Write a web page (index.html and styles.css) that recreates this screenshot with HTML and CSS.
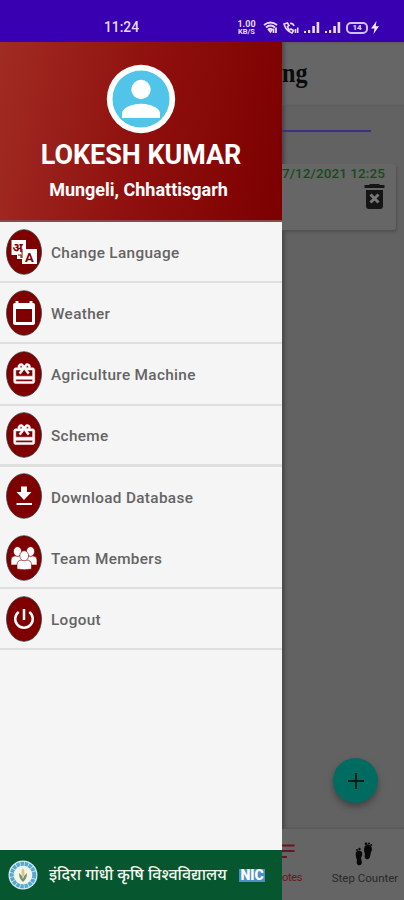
FILE: index.html
```html
<!DOCTYPE html>
<html lang="en">
<head>
<meta charset="utf-8">
<title>Navigation drawer</title>
<link rel="stylesheet" href="styles.css">
</head>
<body>
<div class="status">
  <span class="clock">11:24</span>
  <div class="status-icons">
    <span class="speed"><span class="rate">1.00</span><span class="unit">KB/S</span></span>
    <svg class="wifi" width="15" height="13" viewBox="0 0 15 13" fill="none" stroke="#e6dcff" stroke-width="1.800"><path d="M1 4Q7.500-1 14 4M3 6.500Q7.500 2.500 12 6.500M5.500 8.500Q7 7 9 8.500L7.500 11z"/><path d="M10.500 12V7.500M13 6.500V12"/></svg>
    <svg class="call" width="16" height="13" viewBox="0 0 16 13" fill="none" stroke="#e6dcff" stroke-width="1.600"><path d="M1 3Q3 10 9 12L10.500 9.500L8 8L6.500 9Q5 7.500 4.500 5.500L6 4.500L4.500 2zM7 2.500Q10 2 11 5"/><path d="M12.500 12V8M14.700 12V6.500"/></svg>
    <svg class="signal" width="16" height="13" viewBox="0 0 16 13" fill="#e6dcff"><path d="M0 10h2v2H0zM4 9h2.200v3H4zM8.300 5h2.600v7H8.300zM12.600 1h2.600v11h-2.600z"/></svg>
    <svg class="signal" width="16" height="13" viewBox="0 0 16 13" fill="#e6dcff"><path d="M0 10h2v2H0zM4 9h2.200v3H4zM8.300 5h2.600v7H8.300zM12.600 1h2.600v11h-2.600z"/></svg>
    <span class="battery">14</span>
    <svg class="bolt" width="8" height="13" viewBox="0 0 8 13" fill="#f3edff"><path d="M5.500 0L0 7.500h3.500L2.500 13L8 5.200H4.700z"/></svg>
  </div>
</div>
<div class="screen">
  <aside class="drawer">
    <header class="profile">
      <svg class="avatar" width="70" height="70" viewBox="0 0 70 70"><circle cx="35" cy="35" r="34.200" fill="#fff"/><circle cx="35" cy="35" r="28.500" fill="#50c4e9"/><circle cx="35" cy="25.500" r="9.700" fill="#fff"/><path d="M16 54v-4.500C16 43 28.500 39.800 35 39.800S54 43 54 49.500V54z" fill="#fff"/></svg>
      <div class="name">LOKESH KUMAR</div>
      <div class="place">Mungeli, Chhattisgarh</div>
    </header>
    <nav class="menu">
      <a class="item"><svg class="icon" viewBox="0 0 36 46"><ellipse class="disc" cx="18" cy="23" rx="17.500" ry="22.300"/><path fill="#fff" d="M5.500 11H20v9h11v15H16v-5h-5v-4H5.500z"/><text class="glyph-hi" x="6.500" y="22.500">अ</text><text class="glyph-a" x="19" y="32.500">A</text><path d="M12 26h3v3M16 20v9" fill="none" stroke="#7f0000"/></svg><span>Change Language</span></a>
      <a class="item"><svg class="icon" viewBox="0 0 36 46"><ellipse class="disc" cx="18" cy="23" rx="17.500" ry="22.300"/><path fill="#fff" fill-rule="evenodd" d="M9.500 11h3v2h11v-2h3v2h.500Q29 13 29 15v18q0 2-2 2H9q-2 0-2-2V15q0-2 2-2h.500zM10 19v13h16V19z"/></svg><span>Weather</span></a>
      <a class="item"><svg class="icon" viewBox="0 0 36 46"><ellipse class="disc" cx="18" cy="23" rx="17.500" ry="22.300"/><g transform="translate(5.600 10.500) scale(1.050)"><path class="gift" d="M20 6h-2.180c.110-.310.180-.650.180-1a2.996 2.996 0 0 0-5.500-1.650l-.500.670-.500-.680C10.960 2.540 10.050 2 9 2 7.340 2 6 3.340 6 5c0 .350.070.690.180 1H4c-1.110 0-1.990.890-1.990 2L2 19c0 1.110.890 2 2 2h16c1.110 0 2-.890 2-2V8c0-1.110-.890-2-2-2zm-5-2c.550 0 1 .450 1 1s-.450 1-1 1-1-.450-1-1 .450-1 1-1zM9 4c.550 0 1 .450 1 1s-.450 1-1 1-1-.450-1-1 .450-1 1-1zm11 15H4v-2h16v2zm0-5H4V8h5.080L7 10.830 8.620 12 12 7.400l3.380 4.600L17 10.830 14.920 8H20v6z"/></g></svg><span>Agriculture Machine</span></a>
      <a class="item wide-rule"><svg class="icon" viewBox="0 0 36 46"><ellipse class="disc" cx="18" cy="23" rx="17.500" ry="22.300"/><g transform="translate(5.600 10.500) scale(1.050)"><path class="gift" d="M20 6h-2.180c.110-.310.180-.650.180-1a2.996 2.996 0 0 0-5.500-1.650l-.500.670-.500-.680C10.960 2.540 10.050 2 9 2 7.340 2 6 3.340 6 5c0 .350.070.690.180 1H4c-1.110 0-1.990.890-1.990 2L2 19c0 1.110.890 2 2 2h16c1.110 0 2-.890 2-2V8c0-1.110-.890-2-2-2zm-5-2c.550 0 1 .450 1 1s-.450 1-1 1-1-.450-1-1 .450-1 1-1zM9 4c.550 0 1 .450 1 1s-.450 1-1 1-1-.450-1-1 .450-1 1-1zm11 15H4v-2h16v2zm0-5H4V8h5.080L7 10.830 8.620 12 12 7.400l3.380 4.600L17 10.830 14.920 8H20v6z"/></g></svg><span>Scheme</span></a>
      <a class="item no-rule"><svg class="icon" viewBox="0 0 36 46"><ellipse class="disc" cx="18" cy="23" rx="17.500" ry="22.300"/><path fill="#fff" d="M15 13.500h6V19h4.500L18 27l-7.500-8H15zM10.500 30h15.500v2H10.500z"/></svg><span>Download Database</span></a>
      <a class="item"><svg class="icon" viewBox="0 0 36 46"><ellipse class="disc" cx="18" cy="23" rx="17.500" ry="22.300"/><g fill="#fff" stroke="#7f0000" stroke-width=".600"><path d="M5 30v-5q0-4 4-4h5q4 0 4 4v5zM18 30v-5q0-4 4-4h5q4 0 4 4v5z"/><ellipse cx="11.500" cy="16.500" rx="4" ry="4.800"/><ellipse cx="24.500" cy="16.500" rx="4" ry="4.800"/><path d="M11 34v-4q0-5 5-5h4.500q5 0 5 5v4q-7 1.500-14.500 0z"/><ellipse cx="18.200" cy="20.800" rx="4.400" ry="5"/></g></svg><span>Team Members</span></a>
      <a class="item"><svg class="icon" viewBox="0 0 36 46"><ellipse class="disc" cx="18" cy="23" rx="17.500" ry="22.300"/><path fill="none" stroke="#fff" stroke-width="2.500" d="M18 13v11M12.700 16a8.800 8.800 0 1 0 10.600 0"/></svg><span>Logout</span></a>
    </nav>
    <footer class="university">
      <svg class="seal" width="30" height="30" viewBox="0 0 30 30"><circle cx="15" cy="15" r="14.500" fill="#d9edf2"/><circle cx="15" cy="15" r="11.300" fill="none" stroke="#55a9cf" stroke-width="4" stroke-dasharray="3.500 .700"/><circle cx="15" cy="15" r="9" fill="#f4f5e9"/><path d="M15 22Q11 19 11 13Q14 15 15 19Q16 15 19 13Q19 19 15 22" fill="#769067"/><path d="M15 8q3 4 0 10q-3-6 0-10" fill="#d4c58e"/></svg>
      <span class="uni-name">इंदिरा गांधी कृषि विश्वविद्यालय</span>
      <span class="nic">NIC</span>
    </footer>
  </aside>
  <main class="content">
    <h1 class="title"><span>ng</span></h1>
    <div class="tab-line"></div>
    <section class="card">
      <span class="date">7/12/2021 12:25</span>
      <svg class="trash" width="21" height="26" viewBox="0 0 21 26"><path fill="#151515" d="M6 1h9l1 1h4.500v3H.500V2H5zM2 7h17v16q0 3-3 3H5q-3 0-3-3z"/><path d="M6.500 11.500l8 8M14.500 11.500l-8 8" stroke="#777" stroke-width="3"/></svg>
    </section>
    <div class="fab"><svg width="16" height="16" viewBox="0 0 16 16"><path d="M8 0v16M0 8h16" stroke="#051b18" stroke-width="2"/></svg></div>
    <div class="tabs">
      <div class="tab notes"><svg width="13" height="15" viewBox="0 0 13 15"><path d="M0 1.500h12.500M0 7h12.500M0 13h5" stroke="#641820" stroke-width="2"/></svg><span>otes</span></div>
      <div class="tab steps"><svg width="18" height="24" viewBox="0 0 18 24" fill="#080808"><path d="M1 10q3-3 6 0q1 3-1 6l1 5q-1 3-4 2q-2-1-1-5Q0 13 1 10M10 4q3-3 6 0q2 3 0 6l-1 5q-1 3-4 2q-2-1-1-5Q8 7 10 4"/><circle cx="2" cy="8" r="1"/><circle cx="4.500" cy="7" r="1.200"/><circle cx="11" cy="1.800" r="1.400"/><circle cx="14" cy="1.500" r="1"/><circle cx="16.200" cy="3" r="1"/></svg><span>Step Counter</span></div>
    </div>
  </main>
</div>
</body>
</html>
```
FILE: styles.css
```css
* { box-sizing: border-box; }
body { margin: 0; width: 404px; height: 900px; overflow: hidden; font-family: Roboto, "Noto Sans", sans-serif; }
.status { height: 42px; padding: 13px 25px 0 104px; display: flex; justify-content: space-between; align-items: center; background: #3900b1; color: #e6dcff; }
.clock { font-size: 13.800px; font-weight: 500; line-height: 15px; }
.status-icons { display: flex; align-items: center; }
.speed { display: flex; flex-direction: column; align-items: center; width: 19px; margin-right: 7px; font-weight: 700; line-height: 7px; }
.rate { font-size: 9px; }
.unit { font-size: 7.500px; }
.call { margin-left: 5px; }
.signal { margin-left: 5px; }
.battery { width: 22px; height: 12px; margin-left: 5px; border: 2px solid #cfc0fa; border-radius: 5px; font-size: 8px; font-weight: 700; line-height: 8px; text-align: center; }
.bolt { margin-left: 3px; }
.screen { display: grid; grid-template-columns: 282px 122px; height: 858px; }
.drawer { display: flex; flex-direction: column; min-width: 0; background: #f5f5f5; }
.profile { height: 180px; padding-top: 22px; display: flex; flex-direction: column; align-items: center; color: #fff; background: linear-gradient(100deg, #a12c23 0%, #8f100e 50%, #7c0000 100%); border-bottom: 2px solid #8d4848; }
.name { margin-top: 4px; font-size: 26.900px; font-weight: 700; line-height: 34px; white-space: nowrap; }
.place { margin-top: 7px; margin-right: 5px; font-size: 18px; font-weight: 700; line-height: 22px; white-space: nowrap; }
.menu { flex: 1; display: flex; flex-direction: column; }
.item { height: 61.200px; display: flex; align-items: center; gap: 9px; padding-left: 6px; border-bottom: 2px solid #dedfdf; color: #646464; font-size: 15.300px; font-weight: 500; letter-spacing: .350px; }
.item span { padding-top: 3px; }
.item.wide-rule { border-bottom-width: 3px; }
.item.no-rule { border-bottom-color: transparent; }
.icon { width: 36px; height: 46px; flex: none; }
.disc { fill: #7f0000; stroke: #233b3b; stroke-width: .700; }
.gift { fill: #fff; stroke: #fff; stroke-width: .500; }
.glyph-hi { font: 700 12px "Noto Sans", sans-serif; fill: #7f0000; }
.glyph-a { font: 700 13px Roboto, sans-serif; fill: #7f0000; }
.university { height: 50px; display: flex; align-items: center; padding: 0 17px 0 8px; background: #06572f; color: #f1f8ee; }
.uni-name { margin-left: 11px; font-size: 16.100px; font-weight: 500; line-height: 26px; white-space: nowrap; }
.nic { width: 26px; height: 13px; margin-left: auto; background: #4b8fc8; color: #fff; font-size: 14px; font-weight: 900; line-height: 13px; text-align: center; }
.content { display: flex; flex-direction: column; min-width: 0; background: #626262; box-shadow: inset 3px 0 3px #4c4c4c; overflow: hidden; }
.title { height: 64px; margin: 0; background: #666; box-shadow: inset 3px 0 3px #505050; font: 700 28px/62px "Liberation Serif", serif; color: #0b0b0b; }
.title span { display: inline-block; transform: scaleX(.86); transform-origin: left; }
.tab-line { height: 26px; width: 89px; border-bottom: 2px solid #3b3180; }
.card { height: 66px; margin: 32px 8px 0 0; padding: 0 11px 0 0; display: flex; flex-direction: column; align-items: flex-end; background: #666; border-radius: 0 3px 3px 0; box-shadow: 1px 2px 3px #505050; }
.date { color: #164b1c; font-size: 13.500px; font-weight: 500; line-height: 18px; letter-spacing: .080px; white-space: nowrap; }
.trash { margin-top: 1px; }
.fab { width: 45px; height: 45px; margin: auto 0 26px 51px; display: flex; align-items: center; justify-content: center; background: #006b60; border-radius: 50%; box-shadow: 0 4px 6px #444; flex: none; }
.tabs { height: 71px; display: flex; background: #656565; box-shadow: 0 -1px 2px #555; font-size: 12px; line-height: 16px; color: #292929; }
.tab { display: flex; flex-direction: column; }
.notes { width: 48px; padding-top: 15px; color: #641820; }
.notes span { margin-top: 11px; font-size: 11px; letter-spacing: -.300px; }
.steps { width: 70px; padding-top: 13px; align-items: center; white-space: nowrap; font-size: 11.500px; }
.steps svg { margin-right: 2px; }
.steps span { margin-top: 4px; }
```
